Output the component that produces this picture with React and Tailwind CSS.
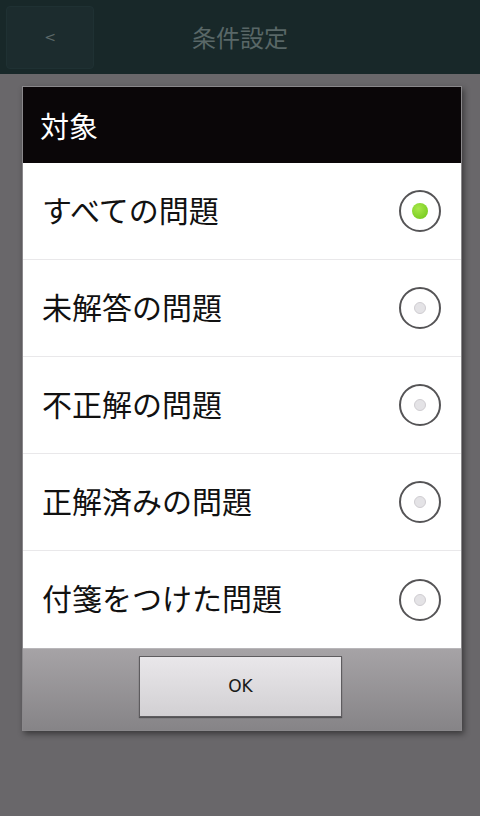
import React from "react";

const items = [
  "すべての問題",
  "未解答の問題",
  "不正解の問題",
  "正解済みの問題",
  "付箋をつけた問題",
];

const jp = { fontFamily: '"Noto Sans CJK JP", "Noto Sans", sans-serif' };

function Radio({ checked }) {
  return (
    <div className="w-[42px] h-[42px] rounded-full border-2 border-[#555456] bg-white flex items-center justify-center">
      {checked ? (
        <div className="w-[16px] h-[16px] rounded-full bg-[radial-gradient(circle_at_40%_35%,#a8e84a,#6cc417)]" />
      ) : (
        <div className="w-[12px] h-[12px] rounded-full bg-[#e4e3e6] border border-[#cfcdd1]" />
      )}
    </div>
  );
}

export default function App() {
  return (
    <div className="w-[480px] h-[816px] bg-[#69676a] flex flex-col" style={jp}>
      <div className="h-[74px] bg-[#182829] flex items-center relative shrink-0">
        <div className="absolute left-[6px] top-[6px] w-[88px] h-[63px] rounded-[4px] bg-[#1c2c2e] border border-[#1f3133] flex items-center justify-center text-[#5b6868] text-[14px]" style={{ fontFamily: '"DejaVu Sans", sans-serif' }}>
          &lt;
        </div>
        <div className="flex-1 text-center text-[24px] text-[#596767] leading-none">条件設定</div>
      </div>

      <div className="mt-[12px] ml-[22px] w-[440px] border border-[#8a888b] shadow-[2px_3px_6px_rgba(0,0,0,0.45)] flex flex-col">
        <div className="h-[76px] bg-[#0a0608] flex items-center pl-[17px] text-white text-[29px] leading-none">
          対象
        </div>
        <div className="bg-white flex flex-col">
          {items.map((t, i) => (
            <div
              key={t}
              className={`h-[97px] flex items-center justify-between pl-[19px] pr-[20px] ${i < items.length - 1 ? "border-b border-[#e9e8ea]" : ""}`}
            >
              <span className="text-[30px] text-[#111] leading-none pb-[5px]">{t}</span>
              <Radio checked={i === 0} />
            </div>
          ))}
        </div>
        <div className="h-[82px] bg-[linear-gradient(to_bottom,#a6a3a6,#868487)] border-t border-[#b8b6b9] flex items-start justify-start pl-[116px] pt-[7px]">
          <div
            className="w-[203px] h-[61px] bg-[linear-gradient(to_bottom,#e9e7ea,#d2d0d3)] border border-[#5e5c5f] shadow-[0_1px_1px_rgba(0,0,0,0.4)] flex items-center justify-center text-[17px] text-[#1a1a1a]"
            style={{ fontFamily: '"DejaVu Sans", sans-serif' }}
          >
            OK
          </div>
        </div>
      </div>
    </div>
  );
}
